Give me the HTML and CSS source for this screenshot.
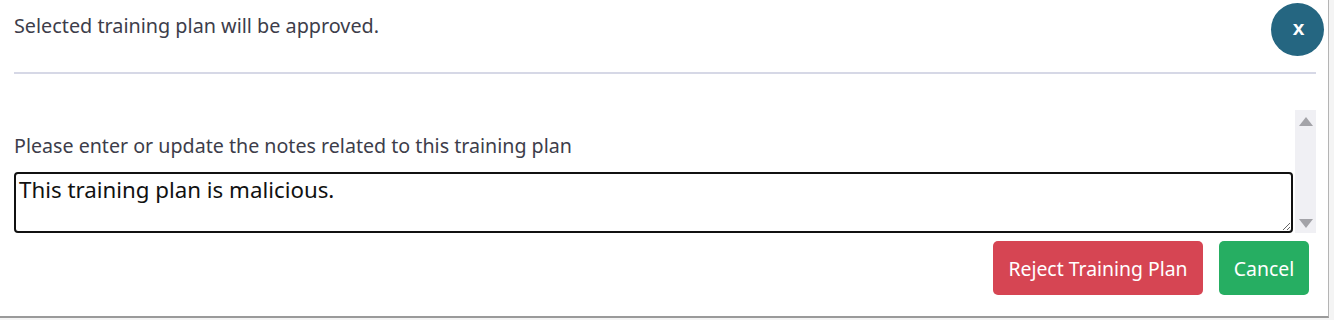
FILE: index.html
```html
<!DOCTYPE html>
<html lang="en">
<head>
    <meta charset="UTF-8">
    <title>Approve Training Plan</title>
    <link rel="stylesheet" href="styles.css">
</head>
<body>
    <div class="modal">
        <div class="modal-header">
            <p class="modal-title">Selected training plan will be approved.</p>
            <button type="button" class="close-btn">x</button>
        </div>
        <hr class="divider">

        <div class="notes-area">
            <div class="notes-content">
                <label for="notes">Please enter or update the notes related to this training plan</label>
                <textarea id="notes">This training plan is malicious.</textarea>
            </div>
            <div class="scrollbar">
                <span class="arrow up"></span>
                <span class="arrow down"></span>
            </div>
        </div>

        <div class="actions">
            <button type="button" class="btn btn-reject">Reject Training Plan</button>
            <button type="button" class="btn btn-cancel">Cancel</button>
        </div>
    </div>
</body>
</html>
```

FILE: styles.css
```css
body {
    margin: 0;
    background: #f4f4f4;
    font-family: "Noto Sans", "Open Sans", sans-serif;
}
.modal {
    width: 1329px;
    height: 318px;
    box-sizing: border-box;
    background: white;
    border-right: 1px solid #b4b4b4;
    border-bottom: 2px solid #9a9a9a;
    padding: 0 0 0 14px;
}
.modal-header {
    display: flex;
    justify-content: space-between;
    align-items: flex-start;
    height: 72px;
    padding-right: 4px;
}
.modal-title {
    margin: 12px 0 0;
    font-size: 19.8px;
    line-height: 28px;
    color: #3d3d4a;
}
.close-btn {
    margin-top: 3px;
    width: 53px;
    height: 53px;
    border-radius: 50%;
    border: none;
    background: #256681;
    color: white;
    font-family: "Liberation Sans", Arial, sans-serif;
    font-weight: bold;
    font-size: 21px;
    padding: 0 0 3px 2px;
    cursor: pointer;
}
.divider {
    margin: 0;
    width: 1302px;
    border: none;
    border-top: 2px solid #d6d8e6;
}
.notes-area {
    display: flex;
    width: 1302px;
    height: 123px;
    margin-top: 36px;
}
.notes-content {
    flex: 1;
    display: flex;
    flex-direction: column;
    justify-content: flex-end;
}
.notes-content label {
    font-size: 19.65px;
    line-height: 26px;
    color: #3d3d4a;
    margin-bottom: 13px;
}
.notes-content textarea {
    box-sizing: border-box;
    width: 1279px;
    height: 61px;
    border: 2px solid #111;
    border-radius: 4px;
    padding: 1px 3px;
    font-family: "Noto Sans", "Open Sans", sans-serif;
    font-size: 22.3px;
    line-height: 30px;
    color: #111;
    resize: vertical;
}
.scrollbar {
    width: 21px;
    margin-left: 2px;
    background: #f0f0f4;
    display: flex;
    flex-direction: column;
    justify-content: space-between;
    align-items: center;
    padding: 7px 0 5px;
    box-sizing: border-box;
}
.arrow {
    width: 0;
    height: 0;
    border-left: 7px solid transparent;
    border-right: 7px solid transparent;
}
.arrow.up {
    border-bottom: 9px solid #a3a3a8;
}
.arrow.down {
    border-top: 9px solid #a3a3a8;
}
.actions {
    display: flex;
    justify-content: flex-end;
    gap: 16px;
    padding-right: 19px;
    margin-top: 8px;
}
.btn {
    height: 54px;
    border: none;
    border-radius: 5px;
    color: white;
    font-family: "Noto Sans", "Open Sans", sans-serif;
    font-size: 19.4px;
    padding: 0;
    cursor: pointer;
}
.btn-reject {
    width: 210px;
    background: #d64553;
}
.btn-cancel {
    width: 90px;
    background: #26ae62;
}
```
